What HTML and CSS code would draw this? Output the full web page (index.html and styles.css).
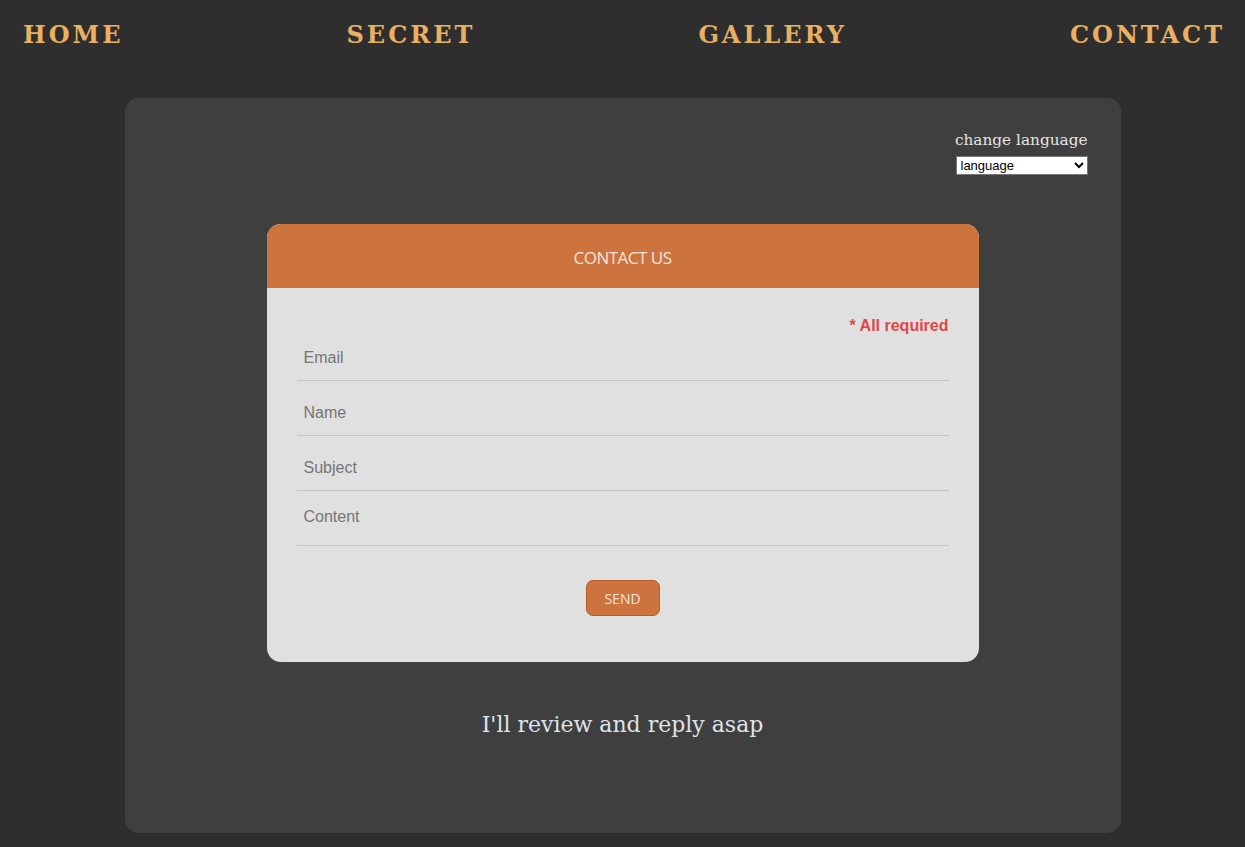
FILE: index.html
```html
<!DOCTYPE html>
<html>
<head>
<meta charset="utf-8">
<link rel="stylesheet" href="styles.css">
</head>
<body>
<nav class="nav">
  <a class="nav-link" href="#">HOME</a>
  <a class="nav-link" href="#">SECRET</a>
  <a class="nav-link" href="#">GALLERY</a>
  <a class="nav-link" href="#">CONTACT</a>
</nav>
<main class="panel">
  <div class="lang">
    <div class="lang-label">change language</div>
    <select class="lang-select"><option>language</option></select>
  </div>
  <section class="card">
    <header class="card-head">CONTACT US</header>
    <form class="card-body">
      <div class="required">* All required</div>
      <input class="field first" type="text" placeholder="Email">
      <input class="field" type="text" placeholder="Name">
      <input class="field" type="text" placeholder="Subject">
      <textarea class="field area" placeholder="Content"></textarea>
      <div class="actions"><button class="send" type="button">SEND</button></div>
    </form>
  </section>
  <p class="note">I'll review and reply asap</p>
</main>
</body>
</html>
```
FILE: styles.css
```css
html, body {
  margin: 0;
  padding: 0;
  background: #2e2e2e;
}
body {
  font-family: "DejaVu Serif", serif;
}
.nav {
  display: flex;
  justify-content: space-between;
  align-items: center;
  height: 68px;
  padding: 0 20px 0 23px;
}
.nav-link {
  color: #e8b060;
  text-decoration: none;
  font-family: "DejaVu Serif", serif;
  font-weight: 900;
  font-size: 24px;
  letter-spacing: 3px;
}
.panel {
  width: 996px;
  height: 735px;
  margin: 30px auto 0;
  background: #3f3f3f;
  border-radius: 14px;
  box-sizing: border-box;
  padding: 32px 32px 0;
  display: flex;
  flex-direction: column;
  align-items: center;
}
.lang {
  align-self: flex-end;
  display: flex;
  flex-direction: column;
  align-items: flex-end;
  width: 132px;
  margin-right: 1px;
}
.lang-label {
  color: #e4e4e4;
  font-size: 15.3px;
  line-height: 20px;
  margin-bottom: 6px;
  white-space: nowrap;
}
.lang-select {
  width: 132px;
  height: 19px;
  font-family: "Liberation Sans", Arial, sans-serif;
  font-size: 13px;
  padding: 0;
  border: 1px solid #777;
  border-radius: 0;
  background: #fff;
  color: #000;
}
.card {
  width: 712px;
  margin-top: 49px;
  border-radius: 14px;
  overflow: hidden;
  background: #e0e0e0;
}
.card-head {
  height: 64px;
  background: #cd733d;
  color: #f2e4da;
  font-family: "Open Sans", sans-serif;
  font-size: 17px;
  display: flex;
  align-items: center;
  justify-content: center;
  letter-spacing: -0.5px;
  padding-top: 2px;
  box-sizing: border-box;
}
.card-body {
  display: flex;
  flex-direction: column;
  padding: 28px 30px 46px;
  margin: 0;
}
.required {
  align-self: flex-end;
  color: #e04848;
  font-family: "Liberation Sans", Arial, sans-serif;
  font-weight: bold;
  font-size: 16px;
  line-height: 20px;
  margin-bottom: 10px;
}
.field {
  display: block;
  border: none;
  border-bottom: 1px solid #c4c4c4;
  background: transparent;
  font-family: "Liberation Sans", Arial, sans-serif;
  font-size: 16px;
  color: #333;
  height: 55px;
  box-sizing: border-box;
  padding: 18px 7px 8px;
  outline: none;
  width: 100%;
  margin: 0;
}
.field.first {
  height: 35px;
  padding: 0 7px 10px;
}
.field::placeholder {
  color: #757575;
}
.area {
  resize: none;
  padding: 17px 7px 0;
  line-height: 18px;
}
.actions {
  display: flex;
  justify-content: center;
  margin-top: 34px;
}
.send {
  width: 74px;
  height: 36px;
  background: #cd733d;
  border: 1px solid #b75a2c;
  border-radius: 7px;
  color: #f2e4da;
  font-family: "Open Sans", sans-serif;
  font-size: 14px;
  padding: 0;
}
.note {
  margin: 50px 0 0;
  color: #dde2ea;
  font-size: 22px;
  font-family: "DejaVu Serif", serif;
}
```
